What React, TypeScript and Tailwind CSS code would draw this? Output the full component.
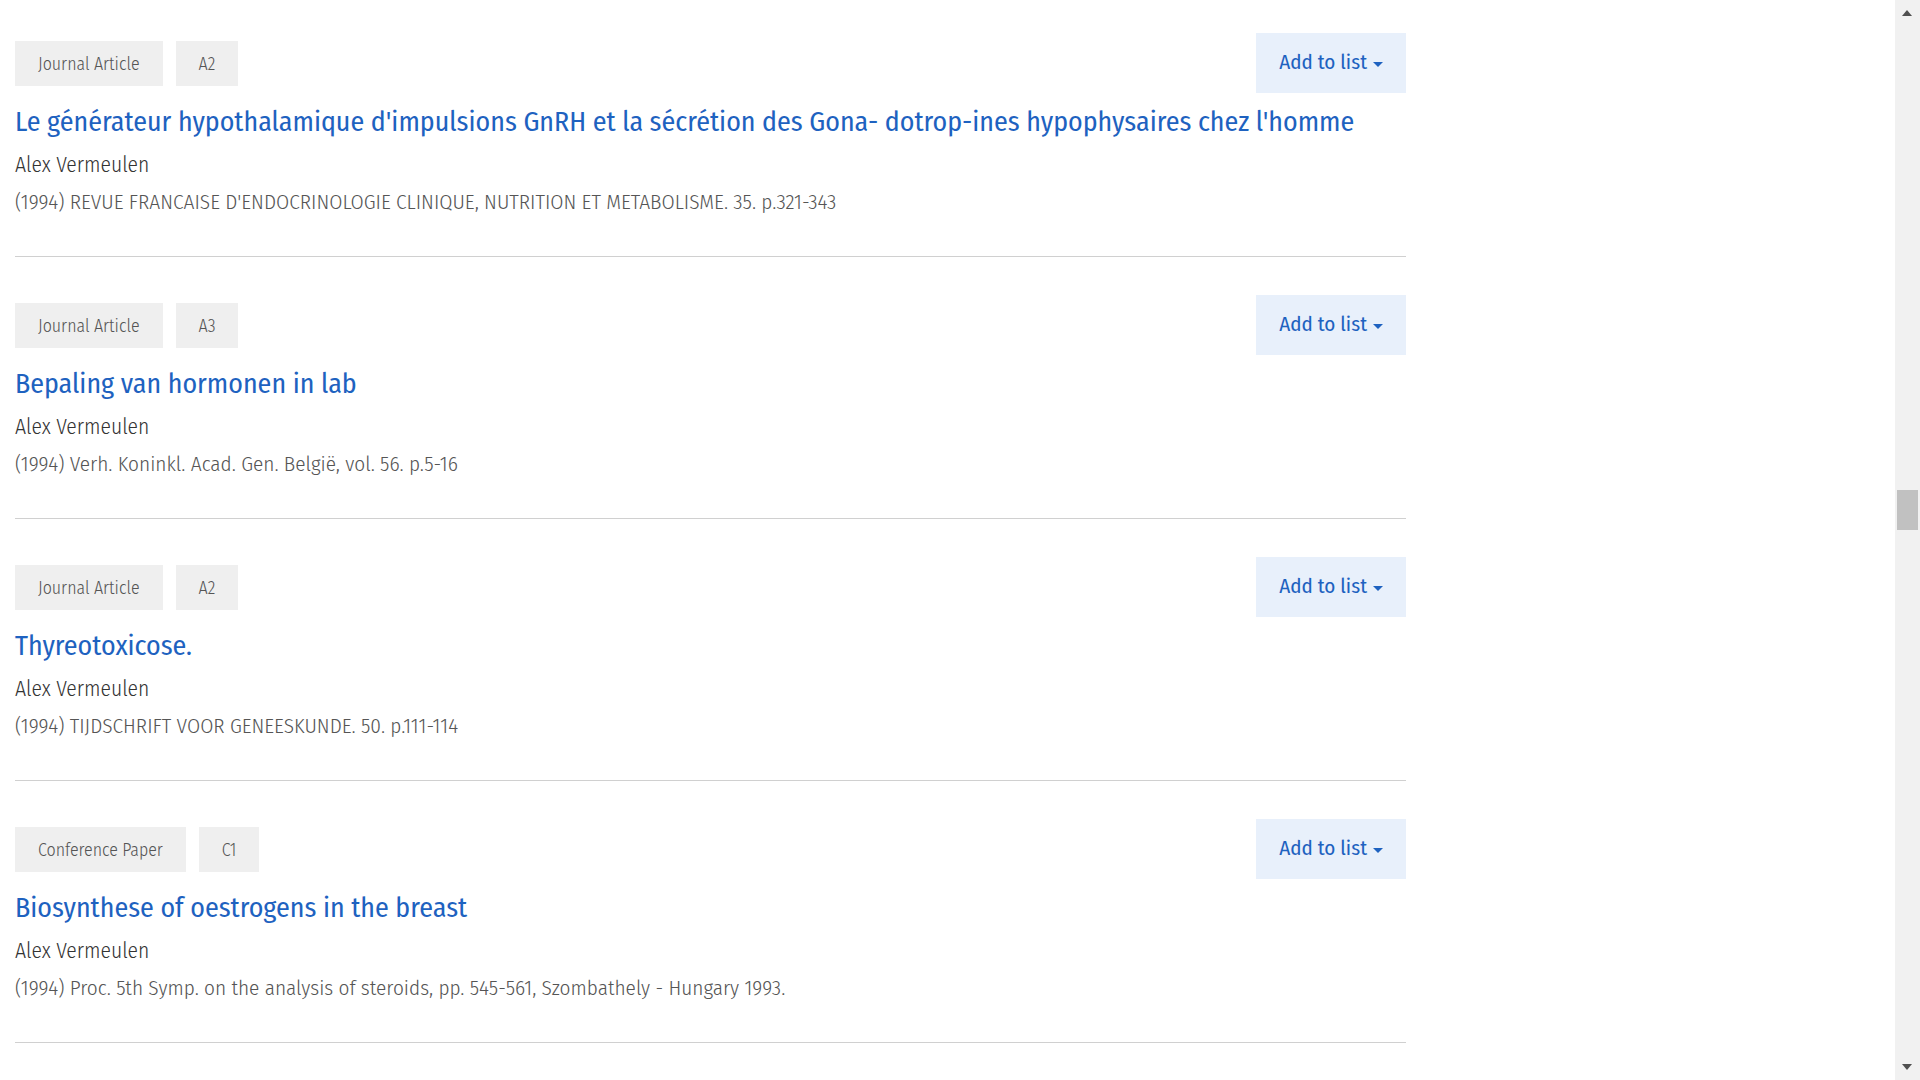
type Publication = {
  id: number;
  type: string;
  rank: string;
  title: string;
  author: string;
  citation: string;
};

const publications: Publication[] = [
  {
    id: 1,
    type: "Journal Article",
    rank: "A2",
    title:
      "Le générateur hypothalamique d'impulsions GnRH et la sécrétion des Gona- dotrop-ines hypophysaires chez l'homme",
    author: "Alex Vermeulen",
    citation:
      "(1994) REVUE FRANCAISE D'ENDOCRINOLOGIE CLINIQUE, NUTRITION ET METABOLISME. 35. p.321-343",
  },
  {
    id: 2,
    type: "Journal Article",
    rank: "A3",
    title: "Bepaling van hormonen in lab",
    author: "Alex Vermeulen",
    citation: "(1994) Verh. Koninkl. Acad. Gen. België, vol. 56. p.5-16",
  },
  {
    id: 3,
    type: "Journal Article",
    rank: "A2",
    title: "Thyreotoxicose.",
    author: "Alex Vermeulen",
    citation: "(1994) TIJDSCHRIFT VOOR GENEESKUNDE. 50. p.111-114",
  },
  {
    id: 4,
    type: "Conference Paper",
    rank: "C1",
    title: "Biosynthese of oestrogens in the breast",
    author: "Alex Vermeulen",
    citation:
      "(1994) Proc. 5th Symp. on the analysis of steroids, pp. 545-561, Szombathely - Hungary 1993.",
  },
];

function Tag({ label }: { label: string }) {
  return (
    <span className="flex h-[45px] items-center bg-[#efefef] px-[23px] pt-[2px] text-[17.8px] font-light text-[#555]">
      {label}
    </span>
  );
}

function AddToList() {
  return (
    <button className="flex h-[60px] items-center gap-[6px] bg-[#e8f0fb] px-[23px] text-[21px] text-[#1e62c0]">
      Add to list
      <span className="mt-[2px] h-0 w-0 border-x-[5px] border-t-[5px] border-x-transparent border-t-[#1e62c0]" />
    </button>
  );
}

function PublicationItem({ pub }: { pub: Publication }) {
  return (
    <div className="border-b border-[#d0d0d0] pt-[38px] pb-[39px] first:pt-[33px]">
      <div className="flex items-center justify-between">
        <div className="flex gap-[13px]">
          <Tag label={pub.type} />
          <Tag label={pub.rank} />
        </div>
        <AddToList />
      </div>
      <h2 className="mt-[11px] text-[27.9px] leading-[36px] text-[#1e62c0]">{pub.title}</h2>
      <p className="mt-[9px] text-[21.5px] leading-[32px] font-light text-[#333]">{pub.author}</p>
      <p className="mt-[6px] text-[21.2px] leading-[30px] font-light text-[#555]">{pub.citation}</p>
    </div>
  );
}

function Scrollbar() {
  return (
    <div className="relative h-full w-[25px] shrink-0 bg-[#f1f1f1]">
      <span className="absolute left-[7px] top-[10px] h-0 w-0 border-x-[5.5px] border-b-[6px] border-x-transparent border-b-[#505050]" />
      <span className="absolute left-[2px] top-[490px] h-[40px] w-[21px] bg-[#c1c1c1]" />
      <span className="absolute left-[7px] bottom-[10px] h-0 w-0 border-x-[5.5px] border-t-[6px] border-x-transparent border-t-[#505050]" />
    </div>
  );
}

export default function App() {
  return (
    <div
      className="flex h-screen overflow-hidden bg-white"
      style={{ fontFamily: "'Fira Sans Condensed', 'Roboto Condensed', 'Liberation Sans', sans-serif" }}
    >
      <main className="flex-1 overflow-hidden pl-[15px]">
        <div className="w-[1391px]">
          {publications.map((pub) => (
            <PublicationItem key={pub.id} pub={pub} />
          ))}
        </div>
      </main>
      <Scrollbar />
    </div>
  );
}
